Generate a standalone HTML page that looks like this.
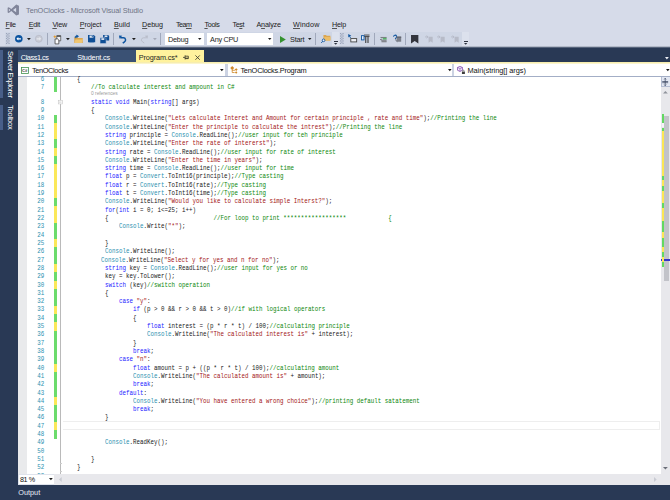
<!DOCTYPE html>
<html><head><meta charset="utf-8"><title>TenOClocks - Microsoft Visual Studio</title>
<style>
*{margin:0;padding:0;box-sizing:border-box}
html,body{width:670px;height:500px;overflow:hidden;background:#d6dbe9}
body{position:relative;font-family:"Liberation Sans",sans-serif;font-size:7px;color:#1e1e1e}
.a{position:absolute;white-space:pre}
.ui{position:absolute;white-space:pre;font-size:7.3px;line-height:9px;color:#1e1e1e}
.mn{position:absolute;white-space:pre}
.mn u{text-decoration:underline;text-decoration-thickness:0.6px;text-underline-offset:0.7px;text-decoration-color:#555}
.cl{position:absolute;white-space:pre;font-family:"Liberation Mono",monospace;font-size:7.117px;line-height:8px;height:8px;color:#202020;transform-origin:0 0;transform:scaleX(0.8197)}
.ln{position:absolute;white-space:pre;font-family:"Liberation Mono",monospace;font-size:7.117px;line-height:8px;height:8px;color:#2b91af;text-align:right;left:26.3px;width:22.33px;transform-origin:0 0;transform:scaleX(0.8197)}
.k{color:#1a1aff}.t{color:#2b91af}.s{color:#a31515}.c{color:#0b870b}
.sep{position:absolute;top:33.4px;width:0.8px;height:11.4px;background:#a0a8bb;margin-left:-0.4px}
.tb{position:absolute;top:31.7px;height:14.3px;background:#cfd6e5;border-radius:1px}
.grip{position:absolute;top:33.2px;width:3.6px;height:10.8px;background:repeating-conic-gradient(#a4adc2 0% 25%,transparent 0% 50%) 0 0/2.4px 2.4px}
.cb{position:absolute;top:32.8px;height:12.4px;background:#fff}
.ar{position:absolute;width:0;height:0;border-left:1.85px solid transparent;border-right:1.85px solid transparent;border-top:2.1px solid #1e1e1e}
svg{position:absolute;overflow:visible}
</style></head><body>

<svg style="left:6.5px;top:4.1px" width="12.6" height="12.2" viewBox="0 0 24 24" preserveAspectRatio="none"><path d="M17.6 1.2 8.3 10 3.3 6.2 1.2 7.2v9.6l2.1 1 5-3.8 9.3 8.8 5.2-2.1V3.3zM3.6 14.6V9.4L6.3 12zM17.4 16.4 11.5 12l5.9-4.4z" fill="#80859a"/></svg>
<div class="a" style="left:26.10px;top:5.80px;font-size:7.3px;line-height:9px;color:#6e7385;letter-spacing:-0.087px">TenOClocks - Microsoft Visual Studio</div>
<div class="mn" style="left:5.60px;top:19.70px;font-size:7.2px;line-height:9px;color:#1b1b1b;letter-spacing:-0.367px"><u>F</u>ile</div>
<div class="mn" style="left:28.70px;top:19.70px;font-size:7.2px;line-height:9px;color:#1b1b1b;letter-spacing:-0.269px"><u>E</u>dit</div>
<div class="mn" style="left:52.40px;top:19.70px;font-size:7.2px;line-height:9px;color:#1b1b1b;letter-spacing:-0.226px"><u>V</u>iew</div>
<div class="mn" style="left:79.80px;top:19.70px;font-size:7.2px;line-height:9px;color:#1b1b1b;letter-spacing:-0.102px"><u>P</u>roject</div>
<div class="mn" style="left:113.90px;top:19.70px;font-size:7.2px;line-height:9px;color:#1b1b1b;letter-spacing:0.022px"><u>B</u>uild</div>
<div class="mn" style="left:142.10px;top:19.70px;font-size:7.2px;line-height:9px;color:#1b1b1b;letter-spacing:-0.054px"><u>D</u>ebug</div>
<div class="mn" style="left:175.90px;top:19.70px;font-size:7.2px;line-height:9px;color:#1b1b1b;letter-spacing:-0.502px">Tea<u>m</u></div>
<div class="mn" style="left:204.40px;top:19.70px;font-size:7.2px;line-height:9px;color:#1b1b1b;letter-spacing:-0.302px"><u>T</u>ools</div>
<div class="mn" style="left:232.60px;top:19.70px;font-size:7.2px;line-height:9px;color:#1b1b1b;letter-spacing:-0.468px">Te<u>s</u>t</div>
<div class="mn" style="left:256.50px;top:19.70px;font-size:7.2px;line-height:9px;color:#1b1b1b;letter-spacing:-0.186px">A<u>n</u>alyze</div>
<div class="mn" style="left:293.00px;top:19.70px;font-size:7.2px;line-height:9px;color:#1b1b1b;letter-spacing:0.158px"><u>W</u>indow</div>
<div class="mn" style="left:332.00px;top:19.70px;font-size:7.2px;line-height:9px;color:#1b1b1b;letter-spacing:-0.203px"><u>H</u>elp</div>
<div class="tb" style="left:4.5px;width:334.5px"></div>
<div class="tb" style="left:340px;width:129px"></div>
<svg style="left:6.10px;top:33.10px" width="3.66" height="10.98" fill="#9aa3b9"><rect x="0.00" y="0.00" width="1.22" height="1.22"/><rect x="2.44" y="0.00" width="1.22" height="1.22"/><rect x="1.22" y="1.22" width="1.22" height="1.22"/><rect x="0.00" y="2.44" width="1.22" height="1.22"/><rect x="2.44" y="2.44" width="1.22" height="1.22"/><rect x="1.22" y="3.66" width="1.22" height="1.22"/><rect x="0.00" y="4.88" width="1.22" height="1.22"/><rect x="2.44" y="4.88" width="1.22" height="1.22"/><rect x="1.22" y="6.10" width="1.22" height="1.22"/><rect x="0.00" y="7.32" width="1.22" height="1.22"/><rect x="2.44" y="7.32" width="1.22" height="1.22"/><rect x="1.22" y="8.54" width="1.22" height="1.22"/><rect x="0.00" y="9.76" width="1.22" height="1.22"/><rect x="2.44" y="9.76" width="1.22" height="1.22"/></svg>
<svg style="left:340.30px;top:33.10px" width="3.66" height="10.98" fill="#9aa3b9"><rect x="0.00" y="0.00" width="1.22" height="1.22"/><rect x="2.44" y="0.00" width="1.22" height="1.22"/><rect x="1.22" y="1.22" width="1.22" height="1.22"/><rect x="0.00" y="2.44" width="1.22" height="1.22"/><rect x="2.44" y="2.44" width="1.22" height="1.22"/><rect x="1.22" y="3.66" width="1.22" height="1.22"/><rect x="0.00" y="4.88" width="1.22" height="1.22"/><rect x="2.44" y="4.88" width="1.22" height="1.22"/><rect x="1.22" y="6.10" width="1.22" height="1.22"/><rect x="0.00" y="7.32" width="1.22" height="1.22"/><rect x="2.44" y="7.32" width="1.22" height="1.22"/><rect x="1.22" y="8.54" width="1.22" height="1.22"/><rect x="0.00" y="9.76" width="1.22" height="1.22"/><rect x="2.44" y="9.76" width="1.22" height="1.22"/></svg>
<div class="sep" style="left:47.3px"></div>
<div class="sep" style="left:113.5px"></div>
<div class="sep" style="left:160.3px"></div>
<div class="sep" style="left:315.2px"></div>
<div class="sep" style="left:374.6px"></div>
<div class="sep" style="left:405.5px"></div>
<svg style="left:14.7px;top:34.9px" width="7.6" height="7.6" viewBox="0 0 16 16"><circle cx="8" cy="8" r="8" fill="#0c54a0"/><path d="M3 8l4-3.6v2.2h5.5v2.8H7v2.2z" fill="#fff"/></svg>
<svg style="left:26.90px;top:37.85px" width="3.8" height="2.2"><polygon points="0,0 3.8,0 1.9,2.2" fill="#1e1e1e"/></svg>
<svg style="left:35.3px;top:34.9px" width="7.6" height="7.6" viewBox="0 0 16 16"><circle cx="8" cy="8" r="7.3" fill="#c9ccd6" stroke="#b3b7c4" stroke-width="1.4"/><path d="M13 8l-4-3.6v2.2H3.5v2.8H9v2.2z" fill="#e6e8ee"/></svg>
<svg style="left:53.4px;top:34.6px" width="8.6" height="9.4" viewBox="0 0 17 19"><path d="M7.4 1.4h8v10.4h-8z" fill="#eef0f5" stroke="#444" stroke-width="1.4"/><path d="M7.4 1h8v2.6h-8z" fill="#444"/><path d="M4 8h5.4l2.2 2.2V18H4z" fill="#fbfbfd" stroke="#3a3a3a" stroke-width="1.5"/><path d="M3.6 0l1.1 2.5L7.2 3.6 4.7 4.7 3.6 7.2 2.5 4.7 0 3.6 2.5 2.5z" fill="#e8961c"/></svg>
<svg style="left:66.15px;top:37.85px" width="3.8" height="2.2"><polygon points="0,0 3.8,0 1.9,2.2" fill="#1e1e1e"/></svg>
<svg style="left:74px;top:35.4px" width="9" height="8" viewBox="0 0 18 16"><path d="M0.5 4.4h6.6l1.6 1.6h8.8V16H0.5z" fill="#dba64e"/><path d="M0.5 16l2.6-7H18l-2.2 7z" fill="#efc673"/><path d="M2.4 6.4V2.6h4.4M5.2 0l4 2.6-4 2.6z" fill="#0c54a0" stroke="#0c54a0" stroke-width="1.2" stroke-linejoin="round"/></svg>
<svg style="left:88px;top:35.2px" width="7.2" height="7.4" viewBox="0 0 14 14"><path d="M0 0h11.5L14 2.5V14H0z" fill="#0f4f96"/><rect x="3" y="0.8" width="7.4" height="4.4" fill="#dfe5f0"/><rect x="7.4" y="1.4" width="1.8" height="3" fill="#0f4f96"/><rect x="2.6" y="8" width="8.8" height="6" fill="#0f4f96"/></svg>
<svg style="left:100px;top:34.6px" width="9.2" height="8.6" viewBox="0 0 18 17"><path d="M6 0h10l2 2v9H6z" fill="#0f4f96"/><rect x="9" y="0.8" width="5.6" height="3.4" fill="#dfe5f0"/><path d="M0 5.5h10l2 2V17H0z" fill="#0f4f96" stroke="#cfd6e5" stroke-width="1"/><rect x="2.6" y="6.4" width="5.8" height="3.4" fill="#dfe5f0"/></svg>
<svg style="left:118.6px;top:34.6px" width="8" height="8.6" viewBox="0 0 16 17"><path d="M2.5 5.5H9a4.3 4.3 0 0 1 2 8L7.5 16" fill="none" stroke="#0c54a0" stroke-width="3"/><path d="M0 1l6.5 0.4L1 7.5z" fill="#0c54a0"/></svg>
<svg style="left:131.85px;top:37.85px" width="3.8" height="2.2"><polygon points="0,0 3.8,0 1.9,2.2" fill="#1e1e1e"/></svg>
<svg style="left:140px;top:34.6px" width="8" height="8.6" viewBox="0 0 16 17"><path d="M13.5 5.5H7a4.3 4.3 0 0 0-2 8L8.5 16" fill="none" stroke="#b9bdca" stroke-width="2"/><path d="M16 1l-6.5 0.4L15 7.5z" fill="#b9bdca"/></svg>
<svg style="left:152.75px;top:37.85px" width="3.8" height="2.2"><polygon points="0,0 3.8,0 1.9,2.2" fill="#a4a9b8"/></svg>
<div class="cb" style="left:165.4px;width:38.2px"></div>
<div class="a" style="left:167.90px;top:34.60px;font-size:7.3px;line-height:9px;color:#1e1e1e;letter-spacing:-0.178px">Debug</div>
<svg style="left:198.15px;top:38.30px" width="3.5" height="2.0"><polygon points="0,0 3.5,0 1.75,2.0" fill="#1e1e1e"/></svg>
<div class="cb" style="left:207.4px;width:65.3px"></div>
<div class="a" style="left:210.10px;top:34.60px;font-size:7.3px;line-height:9px;color:#1e1e1e;letter-spacing:-0.303px">Any CPU</div>
<svg style="left:267.65px;top:38.30px" width="3.5" height="2.0"><polygon points="0,0 3.5,0 1.75,2.0" fill="#1e1e1e"/></svg>
<svg style="left:280px;top:35.7px" width="5.8" height="7" viewBox="0 0 10 12"><path d="M0 0l10 6-10 6z" fill="#35922f"/></svg>
<div class="a" style="left:290.10px;top:34.60px;font-size:7.3px;line-height:9px;color:#1e1e1e;letter-spacing:-0.254px">Start</div>
<svg style="left:308.25px;top:38.30px" width="3.5" height="2.0"><polygon points="0,0 3.5,0 1.75,2.0" fill="#1e1e1e"/></svg>
<svg style="left:321px;top:34.4px" width="9.4" height="9.4" viewBox="0 0 19 19"><path d="M5 2h5l1.5 1.5H19V13H5z" fill="#dca650"/><path d="M5 13l2-7h12v7z" fill="#ecbd66"/><circle cx="5.2" cy="12.8" r="2.7" fill="#e9eef7" stroke="#0c54a0" stroke-width="1.7"/><path d="M3.3 14.8L0.6 18" stroke="#0c54a0" stroke-width="2"/></svg>
<div class="a" style="left:332.2px;top:31.7px;width:7px;height:14.3px;background:#dce1ed"></div>
<div class="a" style="left:334.1px;top:41px;width:3.7px;height:0.9px;background:#2e3340"></div>
<svg style="left:334.25px;top:42.65px" width="3.4" height="1.7"><polygon points="0,0 3.4,0 1.7,1.7" fill="#2e3340"/></svg>
<svg style="left:348px;top:34.4px" width="9.2" height="9.2" viewBox="0 0 18 18"><path d="M0.5 0l6 3.6-2.6 0.7 2 3.4-1.4 0.8-2-3.4L0.5 7z" fill="#0c54a0"/><rect x="5.5" y="9" width="11.5" height="6.5" fill="#eef0f5" stroke="#3f3f3f" stroke-width="1.7"/></svg>
<svg style="left:361px;top:34.2px" width="9" height="9.6" viewBox="0 0 18 19"><path d="M6 2h11M6 5h11" stroke="#3f3f3f" stroke-width="1.8"/><rect x="0.9" y="3.2" width="5.2" height="8.5" fill="#e8edf7" stroke="#0c54a0" stroke-width="1.8"/><path d="M9.5 5v13M14 5v13" stroke="#3f3f3f" stroke-width="2.2"/></svg>
<svg style="left:380.2px;top:36.6px" width="6.6" height="5.2" viewBox="0 0 13 10"><path d="M1 0.8h12" stroke="#555" stroke-width="1.4"/><rect x="5.4" y="1.6" width="7.6" height="3.6" fill="#58b368"/><rect x="3" y="5.2" width="10" height="3.8" fill="#8a8d96"/><path d="M3 9.4h10" stroke="#555" stroke-width="1.2"/><path d="M0 5l3-2.2v4.4z" fill="#555"/></svg>
<svg style="left:392.6px;top:35px" width="8.2" height="6.8" viewBox="0 0 16 13"><path d="M1.2 3.4a3 3 0 1 1 4.4 2.4L4.2 7.4" fill="none" stroke="#0c54a0" stroke-width="2"/><path d="M7 3h9v10H7z" fill="#7b7f8a"/><path d="M7 3h9v2.4H7z" fill="#60646e"/><path d="M4 8.6L8.6 13" stroke="#60646e" stroke-width="1.6"/></svg>
<svg style="left:410.6px;top:34.8px" width="7.4" height="8.4" viewBox="0 0 14 16"><path d="M0 0h14v16l-7-4.6L0 16z" fill="#33353d"/></svg>
<svg style="left:424.8px;top:34.8px" width="8.2" height="8.4" viewBox="0 0 16 16"><path d="M7 3h8v12l-4-2.8L7 15z" fill="#b7bbc8"/><path d="M0 3.5h5M3 1l3 2.5L3 6" fill="none" stroke="#b0b5c3" stroke-width="1.5"/></svg>
<svg style="left:437.4px;top:34.8px" width="8.2" height="8.4" viewBox="0 0 16 16"><path d="M7 3h8v12l-4-2.8L7 15z" fill="#b7bbc8"/><path d="M0 3.5h5M3 1l3 2.5L3 6" fill="none" stroke="#b0b5c3" stroke-width="1.5"/></svg>
<svg style="left:450.6px;top:34.8px" width="8.2" height="8.4" viewBox="0 0 16 16"><path d="M7 3h8v12l-4-2.8L7 15z" fill="#b7bbc8"/><path d="M0 3.5h5M3 1l3 2.5L3 6" fill="none" stroke="#b0b5c3" stroke-width="1.5"/></svg>
<div class="a" style="left:462.2px;top:31.7px;width:7px;height:14.3px;background:#dce1ed"></div>
<div class="a" style="left:463.9px;top:41px;width:3.7px;height:0.9px;background:#2e3340"></div>
<svg style="left:464.05px;top:42.65px" width="3.4" height="1.7"><polygon points="0,0 3.4,0 1.7,1.7" fill="#2e3340"/></svg>
<div class="a" style="left:0;top:47px;width:670px;height:453px;background:#293955"></div>
<div class="a" style="left:0;top:46.4px;width:670px;height:1.5px;background:linear-gradient(#dfe3ee,#293955)"></div>
<div class="a" style="left:0;top:50.2px;width:2.8px;height:47.6px;background:#485e88"></div>
<div class="a" style="left:0;top:105px;width:2.8px;height:25.2px;background:#485e88"></div>
<div class="a" style="left:9.60px;top:50.80px;width:0;height:0"><div class="a" style="left:0;top:0;transform-origin:0 0;transform:rotate(90deg) translateY(-50%);font-size:7.5px;line-height:9px;color:#fff;letter-spacing:-0.365px">Server Explorer</div></div>
<div class="a" style="left:9.60px;top:105.30px;width:0;height:0"><div class="a" style="left:0;top:0;transform-origin:0 0;transform:rotate(90deg) translateY(-50%);font-size:7.5px;line-height:9px;color:#fff;letter-spacing:-0.192px">Toolbox</div></div>
<div class="a" style="left:18px;top:50.3px;width:118.4px;height:11.9px;background:#3a5174"></div>
<div class="a" style="left:20.80px;top:53.00px;font-size:7.3px;line-height:9px;color:#fff;letter-spacing:-0.430px">Class1.cs</div>
<div class="a" style="left:77.30px;top:53.00px;font-size:7.3px;line-height:9px;color:#fff;letter-spacing:-0.188px">Student.cs</div>
<div class="a" style="left:136.4px;top:50.3px;width:67.5px;height:13px;background:#fff29d"></div>
<div class="a" style="left:138.80px;top:53.00px;font-size:7.3px;line-height:9px;color:#1e1e1e;letter-spacing:-0.136px">Program.cs*</div>
<svg style="left:183.3px;top:55.1px" width="5.6" height="4.8" viewBox="0 0 12 10"><path d="M0 5h4.5M4.5 0.6v8.8M4.5 2.4h7M4.5 6.6h7M4.5 7.6h7M11.4 2.4v5" fill="none" stroke="#2e2e22" stroke-width="1.6"/></svg>
<svg style="left:195px;top:54.9px" width="5.2" height="5.2" viewBox="0 0 10 10"><path d="M0.8 0.8l8.4 8.4M9.2 0.8L0.8 9.2" stroke="#35352a" stroke-width="1.6"/></svg>
<svg style="left:665.30px;top:56.60px" width="3.8" height="2.4"><polygon points="0,0 3.8,0 1.9,2.4" fill="#eef1f7"/></svg>
<div class="a" style="left:18px;top:62.2px;width:652px;height:1.6px;background:linear-gradient(#f4e9a0,#fdf9dc)"></div>
<div class="a" style="left:18px;top:63.8px;width:652px;height:12px;background:#fff"></div><div class="a" style="left:18px;top:75.6px;width:652px;height:1px;background:#a3aec6"></div>
<div class="a" style="left:225px;top:63.8px;width:2.8px;height:11.8px;background:#ccd3e3"></div>
<div class="a" style="left:451.6px;top:63.8px;width:2.8px;height:11.8px;background:#ccd3e3"></div>
<svg style="left:21px;top:66.6px" width="8" height="6.8" viewBox="0 0 16 14"><rect x="0.8" y="0.8" width="14.4" height="12.4" fill="#fff" stroke="#3f8f4c" stroke-width="1.6"/><text x="2" y="10.4" font-family="Liberation Sans" font-size="8.5" font-weight="bold" fill="#333">C#</text></svg>
<div class="a" style="left:31.90px;top:66.00px;font-size:7.4px;line-height:9px;color:#111;letter-spacing:-0.366px">TenOClocks</div>
<svg style="left:220.30px;top:69.40px" width="3.6" height="2.2"><polygon points="0,0 3.6,0 1.8,2.2" fill="#111"/></svg>
<svg style="left:229.9px;top:66.4px" width="8.4" height="7.8" viewBox="0 0 17 16"><path d="M0.4 4.2L4.4 0.2l4 4-4 4z" fill="#d08a2a"/><path d="M4.4 7v6.4h5M4.4 8.8h5.6" fill="none" stroke="#d08a2a" stroke-width="1.7"/><path d="M9.6 7.4l3-3 3 3-3 3zM10 13.2l2.6-2.6 2.6 2.6-2.6 2.6z" fill="#d08a2a"/></svg>
<div class="a" style="left:240.40px;top:66.00px;font-size:7.4px;line-height:9px;color:#111;letter-spacing:-0.231px">TenOClocks.Program</div>
<svg style="left:447.50px;top:69.40px" width="3.6" height="2.2"><polygon points="0,0 3.6,0 1.8,2.2" fill="#111"/></svg>
<svg style="left:457.4px;top:65.6px" width="8.4" height="8.4" viewBox="0 0 17 17"><path d="M6 0.8l5 2.2v5.6l-5 2.4-5-2.4V3z" fill="#f3eefa" stroke="#7a3fa8" stroke-width="1.5"/><path d="M1 3l5 2.2L11 3M6 5.2V11" fill="none" stroke="#7a3fa8" stroke-width="1.2"/><rect x="10" y="11.4" width="6" height="4.8" fill="#3d3d3d"/><path d="M11.4 11.4v-1.4a1.6 1.6 0 0 1 3.2 0v1.4" fill="none" stroke="#3d3d3d" stroke-width="1.1"/></svg>
<div class="a" style="left:467.40px;top:66.00px;font-size:7.4px;line-height:9px;color:#111;letter-spacing:-0.057px">Main(string[] args)</div>
<svg style="left:666.00px;top:69.40px" width="3.6" height="2.2"><polygon points="0,0 3.6,0 1.8,2.2" fill="#111"/></svg>
<div class="a" style="left:18px;top:76.6px;width:643px;height:397.4px;background:#fff;overflow:hidden"></div>
<div class="a" style="left:18px;top:76.6px;width:8.6px;height:397.4px;background:#e9eaec"></div>
<div class="a" style="left:60.1px;top:76.6px;width:0.9px;height:397.4px;background:#bababa"></div>
<svg style="left:58.1px;top:99.6px" width="4.6" height="4.2" viewBox="0 0 10 10" preserveAspectRatio="none"><rect x="0.6" y="0.6" width="8.8" height="8.8" fill="#fff" stroke="#c4c4c4" stroke-width="1.3"/><path d="M2.4 5h5.2" stroke="#b0b0b0" stroke-width="1.3"/></svg>
<div class="a" style="left:60.1px;top:462.56px;width:2.2px;height:0.7px;background:#cdcdcd"></div>
<div class="a" style="left:60.1px;top:470.88px;width:2.2px;height:0.7px;background:#cdcdcd"></div>
<div class="a" style="left:62.5px;top:421px;width:597.5px;height:9px;background:#eeeeee"></div><div class="a" style="left:63.4px;top:422px;width:595.8px;height:7px;background:#fff"></div>
<div class="a" style="left:54.2px;top:76.60px;width:2.7px;height:6.74px;background:#6cdb6c"></div>
<div class="a" style="left:54.2px;top:83.19px;width:2.7px;height:8.41px;background:#6cdb6c"></div>
<div class="a" style="left:54.2px;top:114.50px;width:2.7px;height:8.41px;background:#6cdb6c"></div>
<div class="a" style="left:54.2px;top:122.81px;width:2.7px;height:8.41px;background:#fbe85a"></div>
<div class="a" style="left:54.2px;top:131.12px;width:2.7px;height:8.41px;background:#fbe85a"></div>
<div class="a" style="left:54.2px;top:139.43px;width:2.7px;height:8.41px;background:#6cdb6c"></div>
<div class="a" style="left:54.2px;top:147.74px;width:2.7px;height:8.41px;background:#fbe85a"></div>
<div class="a" style="left:54.2px;top:156.05px;width:2.7px;height:8.41px;background:#6cdb6c"></div>
<div class="a" style="left:54.2px;top:164.36px;width:2.7px;height:8.41px;background:#fbe85a"></div>
<div class="a" style="left:54.2px;top:172.67px;width:2.7px;height:8.41px;background:#fbe85a"></div>
<div class="a" style="left:54.2px;top:180.98px;width:2.7px;height:8.41px;background:#fbe85a"></div>
<div class="a" style="left:54.2px;top:189.29px;width:2.7px;height:8.41px;background:#fbe85a"></div>
<div class="a" style="left:54.2px;top:197.60px;width:2.7px;height:8.41px;background:#6cdb6c"></div>
<div class="a" style="left:54.2px;top:205.91px;width:2.7px;height:8.41px;background:#fbe85a"></div>
<div class="a" style="left:54.2px;top:214.22px;width:2.7px;height:8.41px;background:#fbe85a"></div>
<div class="a" style="left:54.2px;top:222.53px;width:2.7px;height:8.41px;background:#6cdb6c"></div>
<div class="a" style="left:54.2px;top:230.84px;width:2.7px;height:8.41px;background:#6cdb6c"></div>
<div class="a" style="left:54.2px;top:239.15px;width:2.7px;height:8.41px;background:#fbe85a"></div>
<div class="a" style="left:54.2px;top:247.46px;width:2.7px;height:8.41px;background:#6cdb6c"></div>
<div class="a" style="left:54.2px;top:255.77px;width:2.7px;height:8.41px;background:#6cdb6c"></div>
<div class="a" style="left:54.2px;top:264.08px;width:2.7px;height:8.41px;background:#fbe85a"></div>
<div class="a" style="left:54.2px;top:272.39px;width:2.7px;height:8.41px;background:#6cdb6c"></div>
<div class="a" style="left:54.2px;top:280.70px;width:2.7px;height:8.41px;background:#fbe85a"></div>
<div class="a" style="left:54.2px;top:289.01px;width:2.7px;height:8.41px;background:#6cdb6c"></div>
<div class="a" style="left:54.2px;top:297.32px;width:2.7px;height:8.41px;background:#6cdb6c"></div>
<div class="a" style="left:54.2px;top:305.63px;width:2.7px;height:8.41px;background:#fbe85a"></div>
<div class="a" style="left:54.2px;top:313.94px;width:2.7px;height:8.41px;background:#6cdb6c"></div>
<div class="a" style="left:54.2px;top:322.25px;width:2.7px;height:8.41px;background:#fbe85a"></div>
<div class="a" style="left:54.2px;top:330.56px;width:2.7px;height:8.41px;background:#6cdb6c"></div>
<div class="a" style="left:54.2px;top:338.87px;width:2.7px;height:8.41px;background:#6cdb6c"></div>
<div class="a" style="left:54.2px;top:347.18px;width:2.7px;height:8.41px;background:#6cdb6c"></div>
<div class="a" style="left:54.2px;top:355.49px;width:2.7px;height:8.41px;background:#6cdb6c"></div>
<div class="a" style="left:54.2px;top:363.80px;width:2.7px;height:8.41px;background:#fbe85a"></div>
<div class="a" style="left:54.2px;top:372.11px;width:2.7px;height:8.41px;background:#6cdb6c"></div>
<div class="a" style="left:54.2px;top:380.42px;width:2.7px;height:8.41px;background:#6cdb6c"></div>
<div class="a" style="left:54.2px;top:388.73px;width:2.7px;height:8.41px;background:#6cdb6c"></div>
<div class="a" style="left:54.2px;top:397.04px;width:2.7px;height:8.41px;background:#fbe85a"></div>
<div class="a" style="left:54.2px;top:405.35px;width:2.7px;height:8.41px;background:#6cdb6c"></div>
<div class="a" style="left:54.2px;top:413.66px;width:2.7px;height:8.41px;background:#6cdb6c"></div>
<div class="a" style="left:54.2px;top:421.97px;width:2.7px;height:8.41px;background:#fbe85a"></div>
<div class="a" style="left:54.2px;top:430.28px;width:2.7px;height:8.41px;background:#6cdb6c"></div>
<div class="ln" style="top:74.69px">6</div>
<div class="cl" style="left:77.03px;top:74.69px">{</div>
<div class="ln" style="top:83.00px">7</div>
<div class="cl" style="left:90.99px;top:83.00px"><span class="c">//To calculate interest and ampount in C#</span></div>
<div class="ln" style="top:97.69px">8</div>
<div class="cl" style="left:90.99px;top:97.69px"><span class="k">static</span> <span class="k">void</span> Main(<span class="k">string</span>[] args)</div>
<div class="ln" style="top:106.00px">9</div>
<div class="cl" style="left:90.99px;top:106.00px">{</div>
<div class="ln" style="top:114.31px">10</div>
<div class="cl" style="left:104.96px;top:114.31px"><span class="t">Console</span>.WriteLine(<span class="s">"Lets calculate Interet and Amount for certain principle , rate and time"</span>);<span class="c">//Printing the line</span></div>
<div class="ln" style="top:122.62px">11</div>
<div class="cl" style="left:104.96px;top:122.62px"><span class="t">Console</span>.WriteLine(<span class="s">"Enter the principle to calculate the intrest"</span>);<span class="c">//Printing the line</span></div>
<div class="ln" style="top:130.93px">12</div>
<div class="cl" style="left:104.96px;top:130.93px"><span class="k">string</span> principle = <span class="t">Console</span>.ReadLine();<span class="c">//user input for teh principle</span></div>
<div class="ln" style="top:139.24px">13</div>
<div class="cl" style="left:104.96px;top:139.24px"><span class="t">Console</span>.WriteLine(<span class="s">"Enter the rate of intererst"</span>);</div>
<div class="ln" style="top:147.54px">14</div>
<div class="cl" style="left:104.96px;top:147.54px"><span class="k">string</span> rate = <span class="t">Console</span>.ReadLine();<span class="c">//user input for rate of interest</span></div>
<div class="ln" style="top:155.85px">15</div>
<div class="cl" style="left:104.96px;top:155.85px"><span class="t">Console</span>.WriteLine(<span class="s">"Enter the time in years"</span>);</div>
<div class="ln" style="top:164.16px">16</div>
<div class="cl" style="left:104.96px;top:164.16px"><span class="k">string</span> time = <span class="t">Console</span>.ReadLine();<span class="c">//user input for time</span></div>
<div class="ln" style="top:172.47px">17</div>
<div class="cl" style="left:104.96px;top:172.47px"><span class="k">float</span> p = <span class="t">Convert</span>.ToInt16(principle);<span class="c">//Type casting</span></div>
<div class="ln" style="top:180.78px">18</div>
<div class="cl" style="left:104.96px;top:180.78px"><span class="k">float</span> r = <span class="t">Convert</span>.ToInt16(rate);<span class="c">//Type casting</span></div>
<div class="ln" style="top:189.09px">19</div>
<div class="cl" style="left:104.96px;top:189.09px"><span class="k">float</span> t = <span class="t">Convert</span>.ToInt16(time);<span class="c">//Type casting</span></div>
<div class="ln" style="top:197.41px">20</div>
<div class="cl" style="left:104.96px;top:197.41px"><span class="t">Console</span>.WriteLine(<span class="s">"Would you like to calculate simple Interst?"</span>);</div>
<div class="ln" style="top:205.72px">21</div>
<div class="cl" style="left:104.96px;top:205.72px"><span class="k">for</span>(<span class="k">int</span> i = 0; i&lt;=25; i++)</div>
<div class="ln" style="top:214.03px">22</div>
<div class="cl" style="left:104.96px;top:214.03px">{                              <span class="c">//For loop to print ******************            {</span></div>
<div class="ln" style="top:222.34px">23</div>
<div class="cl" style="left:118.92px;top:222.34px"><span class="t">Console</span>.Write(<span class="s">"*"</span>);</div>
<div class="ln" style="top:230.65px">24</div>
<div class="ln" style="top:238.96px">25</div>
<div class="cl" style="left:104.96px;top:238.96px">}</div>
<div class="ln" style="top:247.27px">26</div>
<div class="cl" style="left:104.96px;top:247.27px"><span class="t">Console</span>.WriteLine();</div>
<div class="ln" style="top:255.58px">27</div>
<div class="cl" style="left:101.47px;top:255.58px"><span class="t">Console</span>.WriteLine(<span class="s">"Select y for yes and n for no"</span>);</div>
<div class="ln" style="top:263.88px">28</div>
<div class="cl" style="left:104.96px;top:263.88px"><span class="k">string</span> key = <span class="t">Console</span>.ReadLine();<span class="c">//user input for yes or no</span></div>
<div class="ln" style="top:272.19px">29</div>
<div class="cl" style="left:104.96px;top:272.19px">key = key.ToLower();</div>
<div class="ln" style="top:280.50px">30</div>
<div class="cl" style="left:104.96px;top:280.50px"><span class="k">switch</span> (key)<span class="c">//switch operation</span></div>
<div class="ln" style="top:288.81px">31</div>
<div class="cl" style="left:104.96px;top:288.81px">{</div>
<div class="ln" style="top:297.12px">32</div>
<div class="cl" style="left:118.92px;top:297.12px"><span class="k">case</span> <span class="s">"y"</span>:</div>
<div class="ln" style="top:305.43px">33</div>
<div class="cl" style="left:132.88px;top:305.43px"><span class="k">if</span> (p &gt; 0 &amp;&amp; r &gt; 0 &amp;&amp; t &gt; 0)<span class="c">//if with logical operators</span></div>
<div class="ln" style="top:313.75px">34</div>
<div class="cl" style="left:132.88px;top:313.75px">{</div>
<div class="ln" style="top:322.05px">35</div>
<div class="cl" style="left:146.85px;top:322.05px"><span class="k">float</span> interest = (p * r * t) / 100;<span class="c">//calculating principle</span></div>
<div class="ln" style="top:330.37px">36</div>
<div class="cl" style="left:146.85px;top:330.37px"><span class="t">Console</span>.WriteLine(<span class="s">"The calculated interest is"</span> + interest);</div>
<div class="ln" style="top:338.67px">37</div>
<div class="cl" style="left:132.88px;top:338.67px">}</div>
<div class="ln" style="top:346.99px">38</div>
<div class="cl" style="left:132.88px;top:346.99px"><span class="k">break</span>;</div>
<div class="ln" style="top:355.29px">39</div>
<div class="cl" style="left:118.92px;top:355.29px"><span class="k">case</span> <span class="s">"n"</span>:</div>
<div class="ln" style="top:363.61px">40</div>
<div class="cl" style="left:132.88px;top:363.61px"><span class="k">float</span> amount = p + ((p * r * t) / 100);<span class="c">//calculating amount</span></div>
<div class="ln" style="top:371.91px">41</div>
<div class="cl" style="left:132.88px;top:371.91px"><span class="t">Console</span>.WriteLine(<span class="s">"The calculated amount is"</span> + amount);</div>
<div class="ln" style="top:380.23px">42</div>
<div class="cl" style="left:132.88px;top:380.23px"><span class="k">break</span>;</div>
<div class="ln" style="top:388.53px">43</div>
<div class="cl" style="left:118.92px;top:388.53px"><span class="k">default</span>:</div>
<div class="ln" style="top:396.85px">44</div>
<div class="cl" style="left:132.88px;top:396.85px"><span class="t">Console</span>.WriteLine(<span class="s">"You have entered a wrong choice"</span>);<span class="c">//printing default satatement</span></div>
<div class="ln" style="top:405.15px">45</div>
<div class="cl" style="left:132.88px;top:405.15px"><span class="k">break</span>;</div>
<div class="ln" style="top:413.47px">46</div>
<div class="cl" style="left:104.96px;top:413.47px">}</div>
<div class="ln" style="top:421.77px">47</div>
<div class="ln" style="top:430.09px">48</div>
<div class="ln" style="top:438.39px">49</div>
<div class="cl" style="left:104.96px;top:438.39px"><span class="t">Console</span>.ReadKey();</div>
<div class="ln" style="top:446.71px">50</div>
<div class="ln" style="top:455.01px">51</div>
<div class="cl" style="left:90.99px;top:455.01px">}</div>
<div class="ln" style="top:463.33px">52</div>
<div class="cl" style="left:77.03px;top:463.33px">}</div>
<div class="a" style="left:26.3px;top:471.94px;width:18.3px;height:2.06px;overflow:hidden"><div class="ln" style="left:0;top:0">53</div></div>
<div class="a" style="left:91.10px;top:91.40px;font-size:4.9px;line-height:6px;color:#9b9b9b;letter-spacing:-0.058px">0 references</div>
<div class="a" style="left:661px;top:76.6px;width:9px;height:397.4px;background:#e8e8ec"></div>
<div class="a" style="left:661px;top:76.6px;width:9px;height:10px;background:#b4bdd2"></div><div class="a" style="left:661.6px;top:77px;width:8.4px;height:9px;background:#e2e7f2"></div>
<svg style="left:662.4px;top:77.6px" width="6.4" height="8" viewBox="0 0 13 16"><path d="M6.5 0.5v15M0.5 7h12M0.5 9.4h12M4.6 2.6l1.9-2 1.9 2M4.6 13.4l1.9 2 1.9-2" fill="none" stroke="#3a4560" stroke-width="1.5"/></svg>
<svg style="left:663.40px;top:90.80px" width="4.8" height="2.6"><polygon points="0,2.6 4.8,2.6 2.4,0" fill="#8f939c"/></svg>
<svg style="left:663.40px;top:466.50px" width="4.8" height="2.6"><polygon points="0,0 4.8,0 2.4,2.6" fill="#6a6e78"/></svg>
<div class="a" style="left:663.9px;top:116px;width:4.9px;height:164.8px;background:#c2c3c9"></div>
<div class="a" style="left:661.5px;top:123.2px;width:2.5px;height:4.3px;background:#f4f4f6"></div>
<div class="a" style="left:661px;top:258.9px;width:9px;height:2px;background:#3636c8"></div>
<div class="a" style="left:661.5px;top:113.50px;width:2.5px;height:9.75px;background:#62d862"></div>
<div class="a" style="left:661.5px;top:127.50px;width:2.5px;height:3.55px;background:#62d862"></div>
<div class="a" style="left:661.5px;top:131.00px;width:2.5px;height:44.85px;background:#fbe756"></div>
<div class="a" style="left:661.5px;top:175.80px;width:2.5px;height:4.05px;background:#62d862"></div>
<div class="a" style="left:661.5px;top:179.80px;width:2.5px;height:6.25px;background:#fbe756"></div>
<div class="a" style="left:661.5px;top:186.00px;width:2.5px;height:5.05px;background:#62d862"></div>
<div class="a" style="left:661.5px;top:191.00px;width:2.5px;height:12.25px;background:#fbe756"></div>
<div class="a" style="left:661.5px;top:203.20px;width:2.5px;height:4.85px;background:#62d862"></div>
<div class="a" style="left:661.5px;top:208.00px;width:2.5px;height:13.05px;background:#fbe756"></div>
<div class="a" style="left:661.5px;top:221.00px;width:2.5px;height:11.05px;background:#62d862"></div>
<div class="a" style="left:661.5px;top:232.00px;width:2.5px;height:6.35px;background:#fbe756"></div>
<div class="a" style="left:661.5px;top:238.30px;width:2.5px;height:8.55px;background:#62d862"></div>
<div class="a" style="left:661.5px;top:246.80px;width:2.5px;height:4.85px;background:#fbe756"></div>
<div class="a" style="left:661.5px;top:251.60px;width:2.5px;height:5.45px;background:#62d862"></div>
<div class="a" style="left:661.5px;top:257.00px;width:2.5px;height:5.05px;background:#fbe756"></div>
<div class="a" style="left:661.5px;top:262.00px;width:2.5px;height:4.65px;background:#62d862"></div>
<div class="a" style="left:18px;top:474px;width:652px;height:10.8px;background:#e8e8ec"></div>
<div class="a" style="left:18px;top:474px;width:36.2px;height:10.8px;background:#dfe3ec"></div><div class="a" style="left:18.5px;top:474.5px;width:35.2px;height:9.6px;background:#fff"></div>
<div class="a" style="left:20.00px;top:474.70px;font-size:7.2px;line-height:9px;color:#111;letter-spacing:-0.404px">81 %</div>
<svg style="left:49.35px;top:478.35px" width="3.8" height="2.2"><polygon points="0,0 3.8,0 1.9,2.2" fill="#1e1e1e"/></svg>
<svg style="left:58.65px;top:476.50px" width="2.7" height="5"><polygon points="2.7,0 2.7,5 0,2.5" fill="#c9cbd3"/></svg>
<svg style="left:653.85px;top:476.50px" width="2.7" height="5"><polygon points="0,0 0,5 2.7,2.5" fill="#c9cbd3"/></svg>
<div class="a" style="left:18.3px;top:488.2px;font-size:7.3px;line-height:9px;color:#e6ebf5">Output</div>
</body></html>
